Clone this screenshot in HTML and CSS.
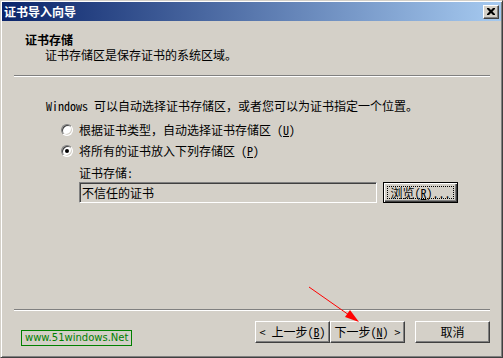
FILE: index.html
```html
<!DOCTYPE html>
<html lang="zh-CN">
<head>
<meta charset="utf-8">
<title>证书导入向导</title>
<link rel="stylesheet" href="styles.css">
</head>
<body>
<div class="window">
  <div class="titlebar">
    <span class="title">证书导入向导</span>
    <span class="close-btn">
      <svg width="8" height="7" viewBox="0 0 8 7"><path d="M0 0h2l2 2 2-2h2v1l-2.5 2.5L8 6v1H6L4 5 2 7H0V6l2.5-2.5L0 1z" fill="#000"/></svg>
    </span>
  </div>
  <div class="header">
    <div class="heading">证书存储</div>
    <div class="subheading">证书存储区是保存证书的系统区域。</div>
  </div>
  <div class="sep"></div>
  <div class="content">
    <p class="intro">Windows 可以自动选择证书存储区，或者您可以为证书指定一个位置。</p>
    <div class="radio-row first"><span class="radio"></span><span>根据证书类型，自动选择证书存储区 (<u>U</u>)</span></div>
    <div class="radio-row second"><span class="radio checked"></span><span>将所有的证书放入下列存储区 (<u>P</u>)</span></div>
    <div class="store">
      <div class="store-label">证书存储:</div>
      <div class="store-row">
        <div class="field">不信任的证书</div>
        <div class="btn default"><span class="focus">浏览(<u>R</u>)...</span></div>
      </div>
    </div>
  </div>
  <div class="sep bottom"></div>
  <div class="footer">
    <span class="link">www.51windows.Net</span>
    <div class="buttons">
      <div class="btn">&lt; 上一步(<u>B</u>)</div>
      <div class="btn">下一步(<u>N</u>) &gt;</div>
      <div class="btn cancel">取消</div>
    </div>
  </div>
  <svg class="arrow" width="503" height="358" viewBox="0 0 503 358">
    <line x1="309" y1="287" x2="349" y2="315" stroke="#ff0000" stroke-width="1"/>
    <polygon points="359,322 345,317 350,310" fill="#ff0000"/>
  </svg>
</div>
</body>
</html>
```
FILE: styles.css
```css
* { box-sizing: border-box; }
html, body { margin: 0; padding: 0; background: #d4d0c8; }
body {
  font-family: "Noto Sans Mono CJK SC", "Noto Sans CJK SC", sans-serif;
  font-size: 12px;
  color: #000;
}
.window {
  position: relative;
  width: 503px;
  height: 358px;
  display: flex;
  flex-direction: column;
  background: #d4d0c8;
  border: 1px solid;
  border-color: #d4d0c8 #404040 #404040 #d4d0c8;
  box-shadow: inset 1px 1px #ffffff, inset -1px -1px #808080;
  padding: 1px;
}
.titlebar {
  height: 19px;
  display: flex;
  align-items: center;
  justify-content: space-between;
  padding: 0 2px 0 2px;
  background: linear-gradient(to right, #0a246a, #a6caf0);
}
.title {
  color: #fff;
  font-weight: bold;
  font-size: 12px;
  line-height: 14px;
  font-family: "Noto Sans CJK SC", sans-serif;
}
.close-btn {
  width: 16px;
  height: 14px;
  display: flex;
  align-items: center;
  justify-content: center;
  background: #d4d0c8;
  border: 1px solid;
  border-color: #ffffff #404040 #404040 #ffffff;
  box-shadow: inset -1px -1px #808080;
  padding-bottom: 1px;
}
.header { padding: 12px 0 0 23px; }
.heading {
  font-weight: bold;
  line-height: 14px;
  font-family: "Noto Sans CJK SC", sans-serif;
}
.subheading {
  margin-top: 1px;
  padding-left: 20px;
  line-height: 14px;
}
.sep {
  margin: 13px 11px 0 12px;
  height: 2px;
  border-top: 1px solid #808080;
  border-bottom: 1px solid #ffffff;
}
.content { padding-left: 44px; }
.intro { margin: 22px 0 0 0; line-height: 14px; }
.radio-row {
  display: flex;
  align-items: center;
  gap: 6px;
  margin-left: 15px;
  line-height: 14px;
}
.radio-row.first { margin-top: 10px; }
.radio-row.second { margin-top: 7px; }
.radio {
  width: 12px;
  height: 12px;
  border-radius: 50%;
  border: 1px solid;
  border-color: #808080 #ffffff #ffffff #808080;
  background: #fff;
  box-shadow: inset 1px 1px #404040, inset -1px -1px #d4d0c8;
  position: relative;
  flex: none;
}
.radio.checked::after {
  content: "";
  position: absolute;
  left: 3px;
  top: 3px;
  width: 4px;
  height: 4px;
  border-radius: 50%;
  background: #000;
}
.store { margin-left: 33px; }
.store-label { margin-top: 8px; line-height: 14px; }
.store-row {
  display: flex;
  gap: 6px;
  margin-top: 2px;
}
.field {
  width: 298px;
  height: 21px;
  border: 1px solid;
  border-color: #808080 #ffffff #ffffff #808080;
  box-shadow: inset 1px 1px #404040, inset -1px -1px #d4d0c8;
  padding: 2px 0 0 2px;
  line-height: 15px;
  background: #d4d0c8;
}
.btn {
  width: 75px;
  height: 22px;
  display: flex;
  align-items: center;
  justify-content: center;
  background: #d4d0c8;
  border: 1px solid;
  border-color: #ffffff #404040 #404040 #ffffff;
  box-shadow: inset -1px -1px #808080;
  line-height: 14px;
}
.btn.default {
  height: 21px;
  border: 1px solid #000;
  box-shadow: inset 1px 1px #ffffff, inset -1px -1px #404040, inset -2px -2px #808080;
  padding: 3px;
}
.focus {
  flex: 1;
  align-self: stretch;
  display: flex;
  align-items: center;
  justify-content: center;
  outline: 1px dotted #000;
  outline-offset: -1px;
}
.sep.bottom { margin-top: auto; }
.footer {
  display: flex;
  justify-content: space-between;
  align-items: flex-start;
  padding: 10px 11px 10px 19px;
}
.link {
  margin-top: 9px;
  height: 16px;
  padding: 0 3px 0 3px;
  border: 1px solid #008000;
  color: #008000;
  font-family: "DejaVu Sans", sans-serif;
  font-size: 10px;
  line-height: 14px;
}
.buttons { display: flex; }
.btn.cancel { margin-left: 10px; }
.arrow {
  position: absolute;
  left: -1px;
  top: -1px;
  pointer-events: none;
}
```
